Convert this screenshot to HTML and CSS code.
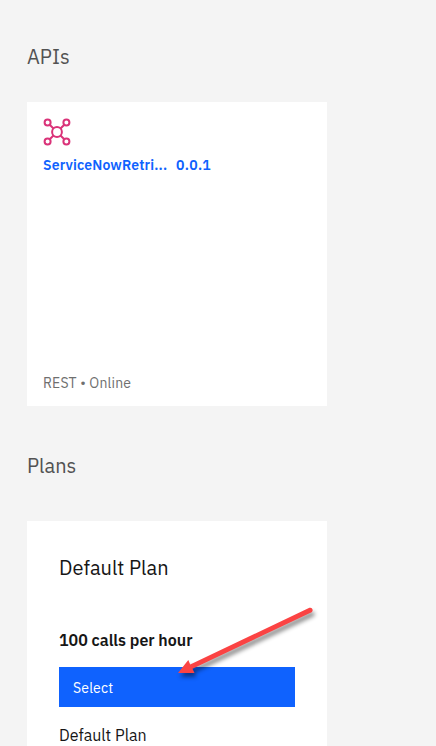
FILE: index.html
```html
<!DOCTYPE html>
<html lang="en">
<head>
<meta charset="utf-8">
<title>API product</title>
<link rel="stylesheet" href="styles.css">
</head>
<body>
<main class="page">
  <h2 class="section-title apis">APIs</h2>
  <article class="card api-card">
    <svg class="api-icon" width="28" height="28" viewBox="0 0 28 28" fill="none" stroke="#da3379" stroke-width="2">
      <circle cx="14" cy="14" r="4.9"/>
      <circle cx="4.6" cy="4.6" r="3"/><circle cx="23.4" cy="4.6" r="3"/>
      <circle cx="4.6" cy="23.4" r="3"/><circle cx="23.4" cy="23.4" r="3"/>
      <path d="M6.7 6.7l3.8 3.8M21.3 6.7l-3.8 3.8M6.7 21.3l3.8-3.8M21.3 21.3l-3.8-3.8"/>
    </svg>
    <div class="api-name"><span class="name">ServiceNowRetri...</span><span class="version">0.0.1</span></div>
    <div class="api-status">REST • Online</div>
  </article>
  <h2 class="section-title plans">Plans</h2>
  <article class="card plan-card">
    <h3 class="plan-title">Default Plan</h3>
    <p class="rate">100 calls per hour</p>
    <button class="select">Select</button>
    <p class="description">Default Plan</p>
    <svg class="arrow" width="150" height="90" viewBox="170 600 150 90">
      <path fill="#fb4343" d="M178 673L188.3 660L190.2 664.4L309.4 607.8A2.5 2.5 0 0 1 311.6 612.2L192.5 668.8L194.5 673Z"/>
    </svg>
  </article>
</main>
</body>
</html>
```
FILE: styles.css
```css
* { box-sizing: border-box; }
body {
  margin: 0;
  height: 746px;
  overflow: hidden;
  background: #f4f4f4;
  color: #161616;
  font-family: "IBM Plex Sans", Roboto, "Liberation Sans", sans-serif;
}
.page { padding: 43px 27px 0; }
h2, h3, p { margin: 0; font-weight: 400; }
.section-title { color: #525252; font-size: 20px; line-height: 28px; }
.plans { margin-top: 46px; }
.card { position: relative; width: 300px; background: #fff; }
.api-card {
  display: flex;
  flex-direction: column;
  height: 304px;
  margin-top: 31px;
  padding: 16px 16px 13px;
}
.api-icon { flex: none; }
.api-name {
  display: flex;
  gap: 9px;
  margin-top: 10px;
  color: #0f62fe;
  font-size: 14px;
  line-height: 18px;
  font-weight: 600;
  letter-spacing: 0.16px;
  white-space: nowrap;
}
.name { flex: none; width: 124px; }
.version { letter-spacing: 0.3px; }
.api-status {
  margin-top: auto;
  color: #6f6f6f;
  font-size: 14px;
  line-height: 20px;
  letter-spacing: 0.16px;
}
.plan-card { height: 225px; margin-top: 41px; padding: 33px 32px 0; }
.plan-title { font-size: 20px; line-height: 28px; }
.rate { margin-top: 46px; font-size: 16px; line-height: 24px; font-weight: 600; }
.select {
  display: block;
  width: 236px;
  height: 40px;
  margin-top: 15px;
  padding: 2px 14px 0;
  border: 0;
  background: #0f62fe;
  color: #fff;
  font: inherit;
  font-size: 14px;
  letter-spacing: 0.16px;
  text-align: left;
}
.description { margin-top: 16px; font-size: 16px; line-height: 24px; }
.arrow {
  position: absolute;
  left: 143px;
  top: 79px;
  filter: drop-shadow(2px 4px 2px rgba(0, 0, 0, 0.45));
}
```
